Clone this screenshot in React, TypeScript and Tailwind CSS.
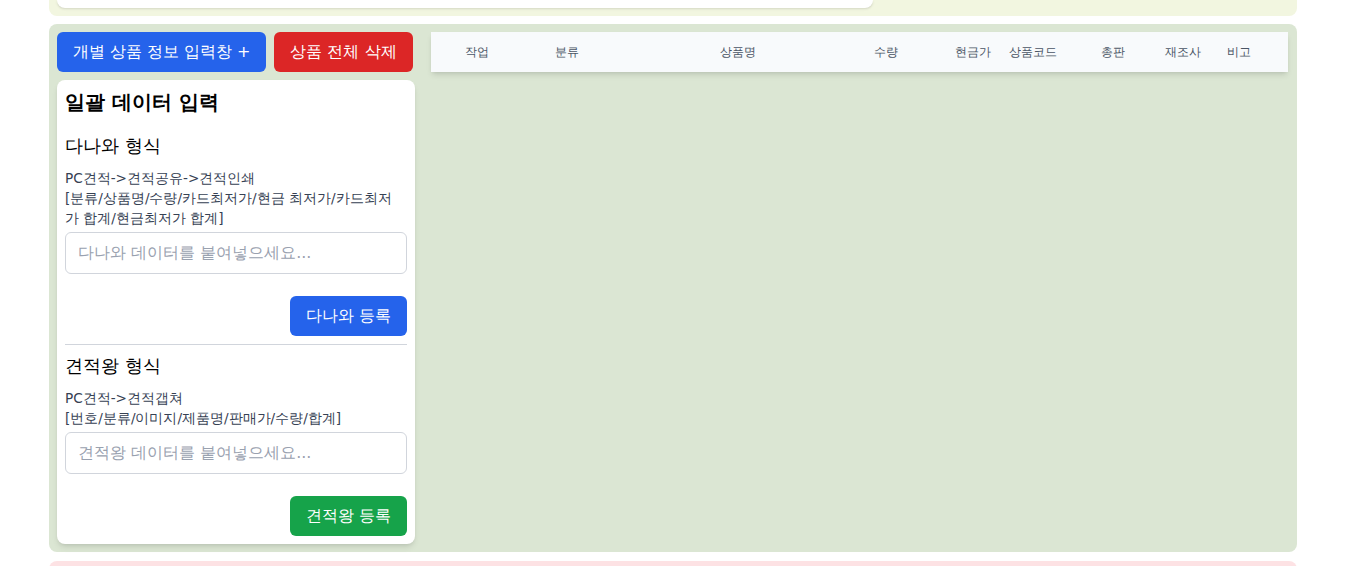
import React from "react";

const columns = [
  { label: "작업", w: "w-[90px]" },
  { label: "분류", w: "w-[165px]" },
  { label: "상품명", w: "w-[154px]" },
  { label: "수량", w: "w-[81px]" },
  { label: "현금가", w: "w-[54px]" },
  { label: "상품코드", w: "w-[92px]" },
  { label: "총판", w: "w-[64px]" },
  { label: "재조사", w: "w-[62px]" },
  { label: "비고", w: "w-[50px]" },
];

function FormatSection({
  title,
  desc,
  placeholder,
  button,
  color,
}: {
  title: string;
  desc: string[];
  placeholder: string;
  button: string;
  color: string;
}) {
  return (
    <div>
      <h3 className="text-lg leading-7 text-black">{title}</h3>
      <div className="mt-2 pr-1 text-[13.6px] leading-5 text-gray-700">
        {desc.map((d) => (
          <p key={d}>{d}</p>
        ))}
      </div>
      <input
        className="mt-1 block w-full rounded-md border border-gray-300 px-3 py-2 text-base leading-6 placeholder:text-gray-400 outline-none"
        placeholder={placeholder}
      />
      <div className="mt-[22px] flex justify-end">
        <button className={`rounded-md px-4 py-2 text-base leading-6 text-white ${color}`}>{button}</button>
      </div>
    </div>
  );
}

export default function App() {
  return (
    <div className="min-h-[566px] bg-white font-['DejaVu_Sans',sans-serif]">
      {/* previous section, scrolled off */}
      <div className="ml-[49px] h-4 w-[1248px] rounded-b-lg bg-[#f2f6e0] pl-2">
        <div className="h-2 w-[816px] rounded-b-lg bg-white shadow-sm" />
      </div>

      <div className="ml-[49px] mt-2 flex w-[1248px] gap-4 rounded-lg bg-[#dbe6d3] p-2 pr-[9px]">
        <div className="w-[358px] shrink-0">
          <div className="flex gap-2">
            <button className="h-10 w-[209px] rounded-md bg-[#2563eb] text-base text-white">개별 상품 정보 입력창 +</button>
            <button className="h-10 w-[139px] rounded-md bg-[#dc2626] text-base text-white">상품 전체 삭제</button>
          </div>
          <div className="mt-2 rounded-lg bg-white p-2 shadow-md">
            <h2 className="text-xl leading-7 font-bold text-black">일괄 데이터 입력</h2>
            <div className="mt-4">
              <FormatSection
                title="다나와 형식"
                desc={["PC견적->견적공유->견적인쇄", "[분류/상품명/수량/카드최저가/현금 최저가/카드최저가 합계/현금최저가 합계]"]}
                placeholder="다나와 데이터를 붙여넣으세요..."
                button="다나와 등록"
                color="bg-[#2563eb]"
              />
            </div>
            <hr className="mt-2 border-gray-300" />
            <div className="mt-[7px]">
              <FormatSection
                title="견적왕 형식"
                desc={["PC견적->견적갭쳐", "[번호/분류/이미지/제품명/판매가/수량/합계]"]}
                placeholder="견적왕 데이터를 붙여넣으세요..."
                button="견적왕 등록"
                color="bg-[#16a34a]"
              />
            </div>
          </div>
        </div>

        <div className="flex-1">
          <div className="flex h-10 items-center bg-[#f8fafc] pl-[34px] text-xs text-gray-600 shadow-md">
            {columns.map((c) => (
              <div key={c.label} className={`${c.w} shrink-0 whitespace-nowrap`}>
                {c.label}
              </div>
            ))}
          </div>
        </div>
      </div>

      <div className="ml-[49px] mt-[9px] h-10 w-[1248px] rounded-t-lg bg-[#fde2e4]" />
    </div>
  );
}
